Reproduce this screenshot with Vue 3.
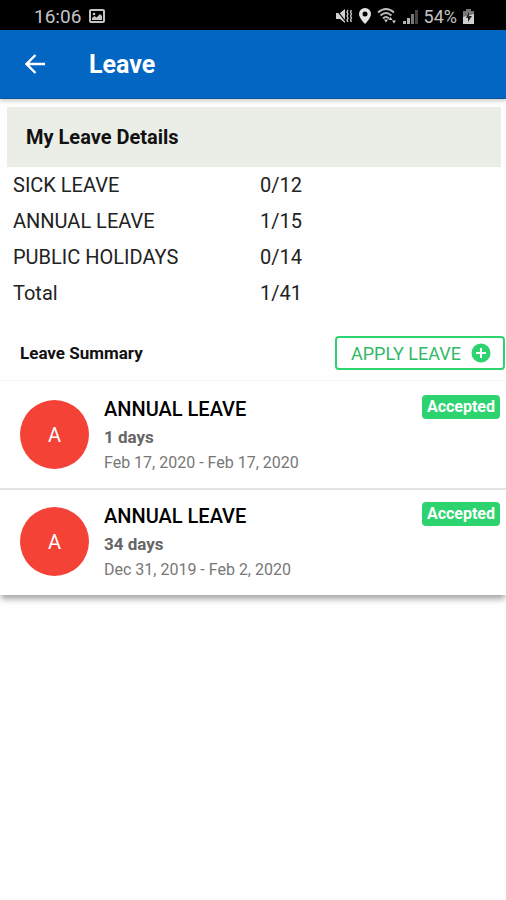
<script setup>
import { ref, computed } from 'vue'

const balances = ref([
  { name: 'SICK LEAVE', used: 0, total: 12 },
  { name: 'ANNUAL LEAVE', used: 1, total: 15 },
  { name: 'PUBLIC HOLIDAYS', used: 0, total: 14 }
])

const leaves = ref([
  { id: 1, type: 'ANNUAL LEAVE', days: 1, from: 'Feb 17, 2020', to: 'Feb 17, 2020', status: 'Accepted' },
  { id: 2, type: 'ANNUAL LEAVE', days: 34, from: 'Dec 31, 2019', to: 'Feb 2, 2020', status: 'Accepted' }
])

const used = computed(() => balances.value.reduce((sum, b) => sum + b.used, 0))
const total = computed(() => balances.value.reduce((sum, b) => sum + b.total, 0))
</script>

<template>
  <div class="screen">
    <div class="status-bar">
      <div class="status-group">
        <span>16:06</span>
        <svg class="picture" width="16" height="14" viewBox="0 0 16 14">
          <rect x="1" y="1" width="14" height="12" rx="1" fill="none" stroke="#c4c4c4" stroke-width="2" />
          <circle cx="5" cy="5" r="1.3" fill="#c4c4c4" />
          <path d="M3 11V9l2.5-2 2 1.5L11 5l2 2v4z" fill="#c4c4c4" />
        </svg>
      </div>
      <div class="status-group right">
        <svg width="17" height="16" viewBox="0 0 17 16">
          <path d="M0 5h4l5-4v14l-5-4H0z" fill="#d0d0d0" />
          <path d="M0 1l10 13" stroke="#000" stroke-width="1.2" />
          <path d="M12 2l-1 2 1 2-1 2 1 2-1 2 1 2M15.500 2l-1 2 1 2-1 2 1 2-1 2 1 2" fill="none" stroke="#d0d0d0" stroke-width="1.300" />
        </svg>
        <svg width="12" height="16" viewBox="0 0 12 16">
          <path d="M6 0a6 6 0 0 0-6 6c0 4 6 10 6 10s6-6 6-10a6 6 0 0 0-6-6z" fill="#e4e4e4" />
          <circle cx="6" cy="6" r="2.500" fill="#000" />
        </svg>
        <svg width="20" height="16" viewBox="0 0 20 16">
          <g fill="none" stroke="#bdbdbd" stroke-width="1.800">
            <path d="M1 4.500q8-7 16 0" />
            <path d="M3.500 7.500q5.500-5 11 0" />
            <path d="M6 10.500q3-3 6 0" />
          </g>
          <path d="M7 11.500h4l-2 3z" fill="#d0d0d0" />
          <path d="M11.500 12l2-3 2 3zM15 12.500h4l-2 3z" fill="#d0d0d0" />
        </svg>
        <svg width="15" height="15" viewBox="0 0 15 15">
          <path d="M0 12h3v3H0zM4 9h3v6H4z" fill="#b4b4b4" />
          <path d="M8 5h3v10H8z" fill="#777" />
          <path d="M12 1h3v14h-3z" fill="#444" />
        </svg>
        <span class="percent">54%</span>
        <svg width="11" height="15" viewBox="0 0 11 15">
          <path d="M3 0h5v2h3v13H0V2h3z" fill="#777" />
          <path d="M0 8l11-3v10H0z" fill="#d0d0d0" />
          <path d="M6 3L3 9h2v4l4-6H6z" fill="#222" />
        </svg>
      </div>
    </div>

    <header class="toolbar">
      <button class="back" type="button" aria-label="Back">
        <svg width="20" height="20" viewBox="0 0 20 20">
          <path d="M20 10H2M10.500 1L1.500 10l9 9" fill="none" stroke="#fff" stroke-width="2.400" />
        </svg>
      </button>
      <h1>Leave</h1>
    </header>

    <main>
      <section class="details">
        <h2>My Leave Details</h2>
        <table>
          <tbody>
            <tr v-for="b in balances" :key="b.name">
              <th scope="row">{{ b.name }}</th>
              <td>{{ b.used }}/{{ b.total }}</td>
            </tr>
            <tr>
              <th scope="row">Total</th>
              <td>{{ used }}/{{ total }}</td>
            </tr>
          </tbody>
        </table>
      </section>

      <section class="summary">
        <div class="summary-head">
          <h3>Leave Summary</h3>
          <button class="apply" type="button">
            APPLY LEAVE
            <svg width="20" height="20" viewBox="0 0 20 20">
              <circle cx="10" cy="10" r="9.500" fill="#2dd36f" />
              <path d="M10 5v10M5 10h10" stroke="#fff" stroke-width="2" />
            </svg>
          </button>
        </div>

        <ul>
          <li v-for="leave in leaves" :key="leave.id" class="card">
            <div class="avatar">{{ leave.type[0] }}</div>
            <div class="info">
              <h4>{{ leave.type }}</h4>
              <p class="days">{{ leave.days }} days</p>
              <p class="dates">{{ leave.from }} - {{ leave.to }}</p>
            </div>
            <span class="badge">{{ leave.status }}</span>
          </li>
        </ul>
      </section>
    </main>
  </div>
</template>

<style>
body {
  margin: 0;
  background: #fefefe;
}
</style>

<style scoped>
.screen {
  min-height: 100vh;
  background: #fefefe;
  font-family: Roboto, "Liberation Sans", sans-serif;
  color: #222;
}

h1, h2, h3, h4, p, ul {
  margin: 0;
  padding: 0;
}

button {
  font-family: inherit;
  cursor: pointer;
}

.status-bar {
  display: flex;
  justify-content: space-between;
  align-items: center;
  height: 30px;
  padding: 2px 32px 0 34px;
  box-sizing: border-box;
  background: #000;
  color: #c4c4c4;
  font-size: 19px;
}

.status-group {
  display: flex;
  align-items: center;
  gap: 8px;
}

.right {
  gap: 6px;
}

.percent {
  font-size: 18px;
}

.toolbar {
  display: flex;
  align-items: center;
  gap: 44px;
  height: 68px;
  padding: 0 25px;
  background: #0366c3;
  border-bottom: 1px solid #0a559c;
  box-shadow: 0 2px 4px rgba(0, 0, 0, 0.2);
}

.back {
  display: flex;
  padding: 0;
  border: none;
  background: none;
}

h1 {
  color: #fff;
  font-size: 25px;
  font-weight: 700;
}

.details {
  padding: 8px 5px 0 7px;
}

h2 {
  padding: 0 19px;
  background: #ebeee7;
  color: #111;
  font-size: 20px;
  font-weight: 700;
  line-height: 60px;
}

table {
  width: 100%;
  border-collapse: collapse;
  table-layout: fixed;
  font-size: 20px;
}

th, td {
  box-sizing: border-box;
  height: 36px;
  padding: 0 6px;
  font-weight: 400;
  text-align: left;
}

th {
  width: 50%;
}

.summary {
  padding-top: 25px;
}

.summary-head {
  display: flex;
  justify-content: space-between;
  align-items: center;
  padding: 0 1px 10px 20px;
}

h3 {
  color: #111;
  font-size: 17px;
  font-weight: 700;
}

.apply {
  display: flex;
  align-items: center;
  justify-content: space-between;
  width: 170px;
  height: 34px;
  padding: 0 12px 0 14px;
  border: 2px solid #2dd36f;
  border-radius: 4px;
  background: #fff;
  color: #32b869;
  font-size: 18px;
}

ul {
  list-style: none;
  box-shadow: 0 5px 6px -1px rgba(0, 0, 0, 0.35);
}

.card {
  display: flex;
  align-items: flex-start;
  gap: 15px;
  padding: 19px 6px 15px 20px;
  background: #fff;
  border-top: 1px solid #f6f6f6;
}

.card + .card {
  padding-top: 17px;
  border-top: 2px solid #e4e4e4;
}

.avatar {
  display: flex;
  align-items: center;
  justify-content: center;
  width: 69px;
  height: 69px;
  border-radius: 50%;
  background: #f44336;
  color: #fff;
  font-size: 20px;
}

.info {
  flex: 1;
}

h4 {
  color: #000;
  font-size: 20px;
  font-weight: 500;
  line-height: 18px;
}

.days {
  margin-top: 9px;
  color: #666;
  font-size: 17px;
  font-weight: 700;
  line-height: 20px;
}

.dates {
  margin-top: 6px;
  color: #777;
  font-size: 16px;
  line-height: 20px;
}

.badge {
  margin-top: -5px;
  padding: 0 5px;
  border-radius: 4px;
  background: #2dd36f;
  color: #fff;
  font-size: 16px;
  font-weight: 700;
  line-height: 24px;
}
</style>
